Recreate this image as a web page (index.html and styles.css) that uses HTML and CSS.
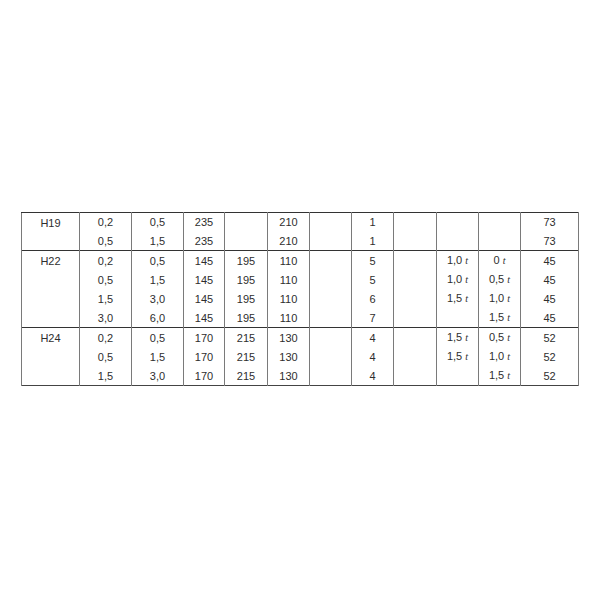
FILE: index.html
```html
<!DOCTYPE html>
<html>
<head>
<meta charset="utf-8">
<link rel="stylesheet" href="styles.css">
</head>
<body>
<table class="spec">
<colgroup>
<col class="w58"><col class="w52"><col class="w52"><col class="w41"><col class="w43"><col class="w42"><col class="w42"><col class="w42"><col class="w43"><col class="w42"><col class="w42"><col class="w58">
</colgroup>
<tbody>
<tr class="first"><td rowspan="2" class="grade">H19</td><td>0,2</td><td>0,5</td><td>235</td><td></td><td>210</td><td></td><td>1</td><td></td><td></td><td></td><td>73</td></tr>
<tr><td>0,5</td><td>1,5</td><td>235</td><td></td><td>210</td><td></td><td>1</td><td></td><td></td><td></td><td>73</td></tr>
<tr class="first"><td rowspan="4" class="grade">H22</td><td>0,2</td><td>0,5</td><td>145</td><td>195</td><td>110</td><td></td><td>5</td><td></td><td>1,0 <i>t</i></td><td>0 <i>t</i></td><td>45</td></tr>
<tr><td>0,5</td><td>1,5</td><td>145</td><td>195</td><td>110</td><td></td><td>5</td><td></td><td>1,0 <i>t</i></td><td>0,5 <i>t</i></td><td>45</td></tr>
<tr><td>1,5</td><td>3,0</td><td>145</td><td>195</td><td>110</td><td></td><td>6</td><td></td><td>1,5 <i>t</i></td><td>1,0 <i>t</i></td><td>45</td></tr>
<tr><td>3,0</td><td>6,0</td><td>145</td><td>195</td><td>110</td><td></td><td>7</td><td></td><td></td><td>1,5 <i>t</i></td><td>45</td></tr>
<tr class="first"><td rowspan="3" class="grade">H24</td><td>0,2</td><td>0,5</td><td>170</td><td>215</td><td>130</td><td></td><td>4</td><td></td><td>1,5 <i>t</i></td><td>0,5 <i>t</i></td><td>52</td></tr>
<tr><td>0,5</td><td>1,5</td><td>170</td><td>215</td><td>130</td><td></td><td>4</td><td></td><td>1,5 <i>t</i></td><td>1,0 <i>t</i></td><td>52</td></tr>
<tr><td>1,5</td><td>3,0</td><td>170</td><td>215</td><td>130</td><td></td><td>4</td><td></td><td></td><td>1,5 <i>t</i></td><td>52</td></tr>
</tbody>
</table>
</body>
</html>
```
FILE: styles.css
```css
html, body {
  margin: 0;
  padding: 0;
  background: #ffffff;
}
body {
  padding: 212px 0 0 21px;
  font-family: "Liberation Sans", Arial, sans-serif;
  font-size: 11px;
  color: #2e2e2e;
}
.spec {
  border-collapse: collapse;
  table-layout: fixed;
  width: 558px;
  border: 1px solid #444444;
}
.w58 { width: 58px; }
.w52 { width: 52px; }
.w41 { width: 41px; }
.w42 { width: 42px; }
.w43 { width: 43px; }
.spec td {
  height: 19px;
  padding: 0;
  text-align: center;
  vertical-align: middle;
  border-left: 1px solid #7a7a7a;
  border-right: 1px solid #7a7a7a;
  line-height: 18px;
  white-space: nowrap;
}
.spec tr.first td {
  height: 18px;
  border-top: 1px solid #333333;
}
.spec td.grade {
  vertical-align: top;
  padding-top: 1px;
}
.spec i {
  font-family: "Liberation Serif", "Times New Roman", serif;
  font-size: 10px;
  font-style: italic;
}
```
